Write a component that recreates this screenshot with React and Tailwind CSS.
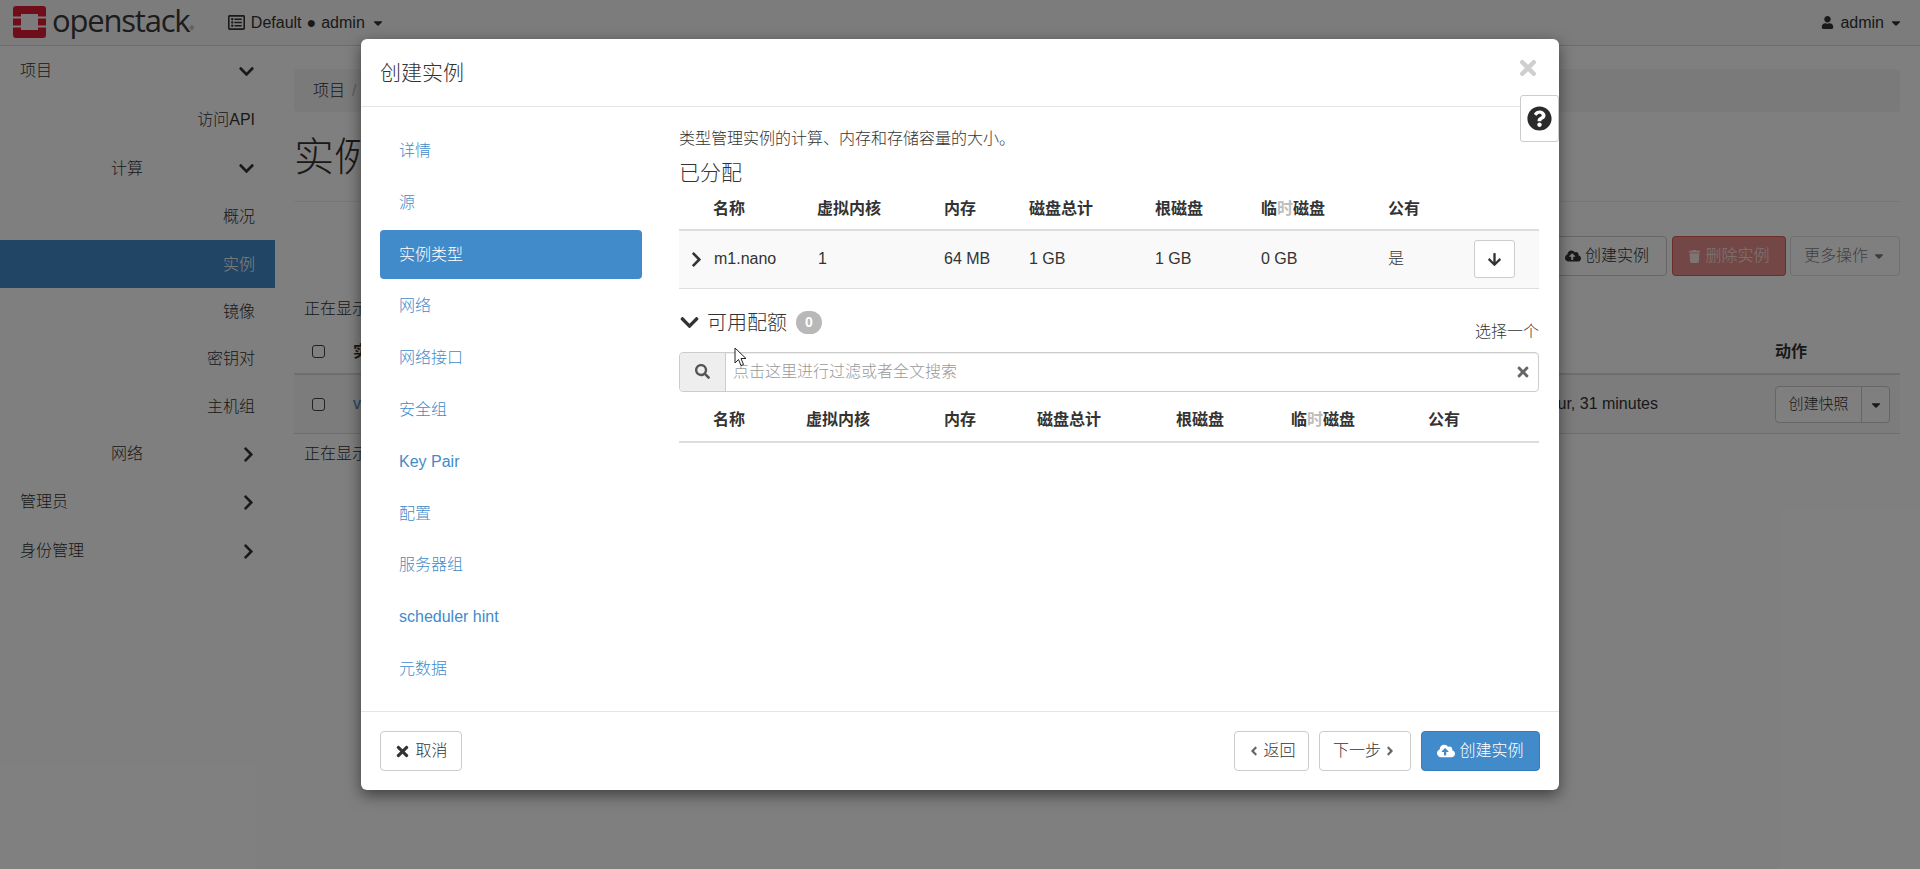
import React from 'react';
import {
  FaChevronDown,
  FaChevronRight,
  FaTimes,
  FaQuestionCircle,
  FaSearch,
  FaCloudUploadAlt,
  FaTrash,
  FaArrowDown,
  FaUser,
  FaCaretDown,
  FaRegListAlt,
  FaAngleLeft,
  FaAngleRight,
} from 'react-icons/fa';

const FONT = "font-['Liberation_Sans','Noto_Sans_CJK_SC',sans-serif]";

const SIDE_ROWS = [
  { label: '项目', icon: 'down', cls: 'h-[49px] pl-5 pr-[20px] justify-between' },
  { label: '访问API', cls: 'h-[49px] pr-5 justify-end' },
  { label: '计算', icon: 'down', cls: 'h-12 pl-[111px] pr-[20px] justify-between' },
  { label: '概况', cls: 'h-[48px] pr-5 justify-end' },
  { label: '实例', active: true, cls: 'h-12 pr-5 justify-end' },
  { label: '镜像', cls: 'h-[47px] pr-5 justify-end' },
  { label: '密钥对', cls: 'h-[47px] pr-5 justify-end' },
  { label: '主机组', cls: 'h-[48px] pr-5 justify-end' },
  { label: '网络', icon: 'right', cls: 'h-[47px] pl-[111px] pr-[18px] justify-between' },
  { label: '管理员', icon: 'right', cls: 'h-[49px] pl-5 pr-[18px] justify-between' },
  { label: '身份管理', icon: 'right', cls: 'h-[49px] pl-5 pr-[18px] justify-between' },
];

const WIZARD_STEPS = ['详情', '源', '实例类型', '网络', '网络接口', '安全组', 'Key Pair', '配置', '服务器组', 'scheduler hint', '元数据'];

function Temp() {
  return (
    <>
      临<span className="text-[#bdbdbd]">时</span>磁盘
    </>
  );
}

function Navbar() {
  return (
    <div className="h-[46px] shrink-0 flex items-center bg-[#f8f8f8] border-b border-[#d8d8d8] text-[#333] text-[16px]">
      <svg width="33" height="32" viewBox="0 0 33 32" className="ml-[13px] mt-[-1px]">
        <rect width="33" height="32" rx="3" fill="#e01b34" />
        <rect x="8" y="8" width="17" height="16" fill="#f8f8f8" />
        <rect x="10" y="10" width="13" height="12" fill="#f8f8f8" />
        <rect x="0" y="10.5" width="8" height="2" fill="#f8f8f8" />
        <rect x="0" y="19.5" width="8" height="2" fill="#f8f8f8" />
        <rect x="25" y="10.5" width="8" height="2" fill="#f8f8f8" />
        <rect x="25" y="19.5" width="8" height="2" fill="#f8f8f8" />
      </svg>
      <span className="ml-[6px] font-['Open_Sans',sans-serif] font-normal text-[31px] leading-none tracking-[-1.2px] text-[#3a3a3a] mt-[-4px]">openstack</span>
      <span className="text-[6px] text-[#555] mt-[12px]">®</span>
      <FaRegListAlt className="ml-[34px] text-[17px]" />
      <span className="ml-[6px]">Default</span>
      <span className="ml-[5px]">●</span>
      <span className="ml-[5px]">admin</span>
      <FaCaretDown className="ml-[6px] text-[14px]" />
      <div className="ml-auto mr-[17px] flex items-center">
        <FaUser className="text-[13px] mr-[6px]" />
        <span>admin</span>
        <FaCaretDown className="ml-[5px] text-[14px]" />
      </div>
    </div>
  );
}

function Sidebar() {
  return (
    <div className="w-[275px] shrink-0 text-[16px] text-[#333]">
      {SIDE_ROWS.map((r) => (
        <div key={r.label} className={`flex items-center pt-[1px] ${r.cls} ${r.active ? 'bg-[#428bca] text-white' : ''}`}>
          <span>{r.label}</span>
          {r.icon === 'down' && <FaChevronDown className="text-[17px]" />}
          {r.icon === 'right' && <FaChevronRight className="text-[17px]" />}
        </div>
      ))}
    </div>
  );
}

function MainPane() {
  return (
    <div className="flex-1 pl-[19px] pr-5 pt-[23px] text-[16px] text-[#333]">
      <div className="h-[43px] bg-[#f5f5f5] rounded flex items-center pl-[19px]">
        项目 <span className="ml-[7px] text-[#bbb]">/</span>
      </div>
      <div className="h-[90px] border-b border-[#eee] text-[40px] leading-[90px]">实例</div>
      <div className="mt-[34px] h-10 flex justify-end gap-[4px]">
        <button className="h-10 w-[120px] mr-[1px] rounded border border-[#ccc] bg-white flex items-center justify-center gap-1">
          <FaCloudUploadAlt className="text-[16px]" />
          创建实例
        </button>
        <button className="h-10 w-[114px] rounded border border-[#d43f3a]/65 bg-[#d9534f]/65 text-white/80 flex items-center justify-center gap-1">
          <FaTrash className="text-[13px]" />
          删除实例
        </button>
        <button className="h-10 w-[110px] rounded border border-[#ccc]/65 text-[#333]/65 flex items-center justify-center gap-1">
          更多操作
          <FaCaretDown className="text-[14px]" />
        </button>
      </div>
      <div className="mt-[23px] pl-[10px] h-5 leading-5">正在显示 1 项</div>
      <div className="mt-[11px] h-[45px] border-b-2 border-[#ddd] flex items-start relative">
        <span className="ml-[18px] mt-[15px] w-[13px] h-[13px] rounded-[3px] border border-[#444] bg-white" />
        <span className="ml-[28px] mt-[10px] font-bold">实例名称</span>
        <span className="absolute left-[1481px] top-[10px] font-bold">动作</span>
      </div>
      <div className="h-[59px] border-b border-[#ddd] bg-[#f9f9f9] flex items-center relative">
        <span className="ml-[18px] w-[13px] h-[13px] rounded-[3px] border border-[#444] bg-white" />
        <span className="ml-[28px] text-[#428bca]">vm1</span>
        <span className="absolute right-[242px]">1 hour, 31 minutes</span>
        <div className="absolute left-[1481px] top-[11px] h-[37px] w-[115px] rounded border border-[#ccc] bg-white flex text-[15px]">
          <span className="w-[86px] border-r border-[#ccc] flex items-center justify-center">创建快照</span>
          <span className="flex-1 flex items-center justify-center">
            <FaCaretDown className="text-[14px]" />
          </span>
        </div>
      </div>
      <div className="mt-[10px] pl-[10px] leading-5">正在显示 1 项</div>
    </div>
  );
}

function WizardNav() {
  return (
    <div className="w-[262px] ml-[19px] mt-[19px] shrink-0 flex flex-col gap-[2.8px] text-[16px] text-[#428bca]">
      {WIZARD_STEPS.map((s) => (
        <div key={s} className={`h-[49px] pl-[19px] pt-[1px] flex items-center rounded ${s === '实例类型' ? 'bg-[#428bca] text-white' : ''}`}>
          {s}
        </div>
      ))}
    </div>
  );
}

function AllocatedTable() {
  return (
    <table className="w-[860px] table-fixed text-[16px] text-[#333] border-collapse">
      <colgroup>
        <col className="w-[26px]" />
        <col className="w-[104px]" />
        <col className="w-[127px]" />
        <col className="w-[85px]" />
        <col className="w-[126px]" />
        <col className="w-[106px]" />
        <col className="w-[127px]" />
        <col className="w-[85px]" />
        <col className="w-[74px]" />
      </colgroup>
      <thead>
        <tr className="h-[45px] border-b-2 border-[#ddd] text-left">
          <th />
          <th className="pl-2 pt-[3px] font-bold">名称</th>
          <th className="pl-2 pt-[3px] font-bold">虚拟内核</th>
          <th className="pl-2 pt-[3px] font-bold">内存</th>
          <th className="pl-2 pt-[3px] font-bold">磁盘总计</th>
          <th className="pl-2 pt-[3px] font-bold">根磁盘</th>
          <th className="pl-2 pt-[3px] font-bold"><Temp /></th>
          <th className="pl-2 pt-[3px] font-bold">公有</th>
          <th />
        </tr>
      </thead>
      <tbody>
        <tr className="h-[58px] bg-[#f9f9f9] border-b border-[#ddd]">
          <td className="pl-[9px]"><FaChevronRight className="text-[17px]" /></td>
          <td className="pl-[9px]">m1.nano</td>
          <td className="pl-[9px]">1</td>
          <td className="pl-2">64 MB</td>
          <td className="pl-2">1 GB</td>
          <td className="pl-2">1 GB</td>
          <td className="pl-2">0 GB</td>
          <td className="pl-2">是</td>
          <td className="pl-[9px]">
            <button className="w-[41px] h-[38px] flex items-center justify-center bg-white border border-[#ccc] rounded-[3px]">
              <FaArrowDown className="text-[15px]" />
            </button>
          </td>
        </tr>
      </tbody>
    </table>
  );
}

function AvailableHeader() {
  return (
    <table className="w-[860px] table-fixed text-[16px] text-[#333] border-collapse">
      <colgroup>
        <col className="w-[26px]" />
        <col className="w-[93px]" />
        <col className="w-[138px]" />
        <col className="w-[93px]" />
        <col className="w-[139px]" />
        <col className="w-[115px]" />
        <col className="w-[137px]" />
        <col className="w-[119px]" />
      </colgroup>
      <thead>
        <tr className="h-[50px] border-b-2 border-[#ddd] text-left">
          <th />
          <th className="pl-2 pt-[7px] font-bold">名称</th>
          <th className="pl-2 pt-[7px] font-bold">虚拟内核</th>
          <th className="pl-2 pt-[7px] font-bold">内存</th>
          <th className="pl-2 pt-[7px] font-bold">磁盘总计</th>
          <th className="pl-2 pt-[7px] font-bold">根磁盘</th>
          <th className="pl-2 pt-[7px] font-bold"><Temp /></th>
          <th className="pl-2 pt-[7px] font-bold">公有</th>
        </tr>
      </thead>
    </table>
  );
}

function Modal() {
  return (
    <div className="absolute left-[361px] top-[39px] w-[1198px] h-[751px] bg-white rounded-md shadow-[0_5px_15px_rgba(0,0,0,0.5)] flex flex-col text-[#333]">
      <div className="h-[68px] shrink-0 border-b border-[#e5e5e5] flex items-center pl-[19px] text-[21px]">创建实例</div>
      <FaTimes className="absolute right-[19px] top-[17px] text-[24px] text-[#cfcfcf]" />
      <div className="absolute right-0 top-[56px] w-[39px] h-[47px] bg-white border border-[#ccc] rounded-[3px] flex items-center justify-center">
        <FaQuestionCircle className="text-[25px] text-[#2b2b2b]" />
      </div>

      <div className="flex-1 flex min-h-0">
        <WizardNav />
        <div className="ml-[37px] w-[860px] pt-[22px]">
          <p className="text-[16px] leading-5">类型管理实例的计算、内存和存储容量的大小。</p>
          <h4 className="mt-[12px] text-[21px] leading-[24px]">已分配</h4>
          <AllocatedTable />
          <div className="mt-[20px] h-[28px] flex items-center relative">
            <FaChevronDown className="text-[21px] text-[#333]" />
            <span className="ml-[7px] text-[20px]">可用配额</span>
            <span className="ml-[9px] w-[26px] h-[23px] rounded-full bg-[#b8b8b8] text-white text-[14px] font-bold flex items-center justify-center">0</span>
            <span className="absolute right-0 top-[11px] text-[16px]">选择一个</span>
          </div>
          <div className="mt-[15px] h-10 flex border border-[#ccc] rounded shadow-[inset_0_1px_1px_rgba(0,0,0,0.075)]">
            <div className="w-[46px] bg-[#eee] border-r border-[#ccc] rounded-l flex items-center justify-center">
              <FaSearch className="text-[15px] text-[#555]" />
            </div>
            <input className="flex-1 pl-[7px] pt-[1px] text-[16px] outline-none placeholder:text-[#999]" placeholder="点击这里进行过滤或者全文搜索" />
            <div className="w-[30px] flex items-center justify-center">
              <FaTimes className="text-[16px] text-[#666]" />
            </div>
          </div>
          <AvailableHeader />
        </div>
      </div>

      <div className="h-[79px] shrink-0 border-t border-[#e5e5e5] flex items-center px-[19px] text-[16px]">
        <button className="h-10 w-[82px] border border-[#ccc] rounded flex items-center justify-center gap-1">
          <FaTimes className="text-[17px]" />
          取消
        </button>
        <button className="ml-auto h-10 w-[75px] border border-[#ccc] rounded flex items-center justify-center gap-[2px]">
          <FaAngleLeft className="text-[14px] text-[#666]" />
          返回
        </button>
        <button className="ml-[10px] h-10 w-[92px] border border-[#ccc] rounded flex items-center justify-center gap-[2px]">
          下一步
          <FaAngleRight className="text-[14px] text-[#666]" />
        </button>
        <button className="ml-[10px] h-10 w-[119px] rounded bg-[#428bca] border border-[#357ebd] text-white flex items-center justify-center gap-1">
          <FaCloudUploadAlt className="text-[18px]" />
          创建实例
        </button>
      </div>
    </div>
  );
}

export default function App() {
  return (
    <div className={`relative w-[1920px] h-[869px] overflow-hidden bg-white font-light ${FONT}`}>
      <div className="flex flex-col h-full">
        <Navbar />
        <div className="flex flex-1">
          <Sidebar />
          <MainPane />
        </div>
      </div>
      <div className="absolute inset-0 bg-black/50" />
      <Modal />
      {/* mouse pointer caught in the shot */}
      <svg width="14" height="20" viewBox="0 0 14 20" className="absolute left-[734px] top-[347px]">
        <path d="M1 1 L1 16 L4.5 12.5 L7 18.5 L9.5 17.5 L7 11.5 L12 11.5 Z" fill="white" stroke="#222" strokeWidth="1" />
      </svg>
    </div>
  );
}
